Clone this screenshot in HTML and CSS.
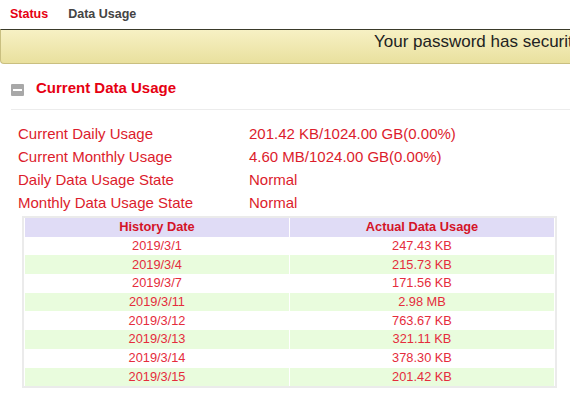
FILE: index.html
```html
<!DOCTYPE html>
<html>
<head>
<meta charset="utf-8">
<link rel="stylesheet" href="styles.css">
</head>
<body>
<nav class="nav">
  <span class="nav-item active">Status</span>
  <span class="nav-item">Data Usage</span>
</nav>
<div class="notice">Your password has security risks, please change it immediately.</div>
<main class="main">
  <div class="section-head">
    <span class="collapse-icon"></span>
    <span class="section-title">Current Data Usage</span>
  </div>
  <div class="info">
    <div class="info-row"><span class="info-label">Current Daily Usage</span><span class="info-value">201.42 KB/1024.00 GB(0.00%)</span></div>
    <div class="info-row"><span class="info-label">Current Monthly Usage</span><span class="info-value">4.60 MB/1024.00 GB(0.00%)</span></div>
    <div class="info-row"><span class="info-label">Daily Data Usage State</span><span class="info-value">Normal</span></div>
    <div class="info-row"><span class="info-label">Monthly Data Usage State</span><span class="info-value">Normal</span></div>
  </div>
  <table class="history">
    <thead>
      <tr><th>History Date</th><th>Actual Data Usage</th></tr>
    </thead>
    <tbody>
      <tr><td>2019/3/1</td><td>247.43 KB</td></tr>
      <tr><td>2019/3/4</td><td>215.73 KB</td></tr>
      <tr><td>2019/3/7</td><td>171.56 KB</td></tr>
      <tr><td>2019/3/11</td><td>2.98 MB</td></tr>
      <tr><td>2019/3/12</td><td>763.67 KB</td></tr>
      <tr><td>2019/3/13</td><td>321.11 KB</td></tr>
      <tr><td>2019/3/14</td><td>378.30 KB</td></tr>
      <tr><td>2019/3/15</td><td>201.42 KB</td></tr>
    </tbody>
  </table>
</main>
</body>
</html>
```

FILE: styles.css
```css
html, body {
  margin: 0;
  padding: 0;
  background: #fff;
  font-family: "Liberation Sans", Arial, sans-serif;
  overflow: hidden;
}

.nav {
  display: flex;
  align-items: center;
  gap: 20px;
  height: 29px;
  padding-left: 10px;
  box-sizing: border-box;
  padding-bottom: 2px;
}

.nav-item {
  font-size: 12.5px;
  font-weight: bold;
  color: #444;
}

.nav-item.active {
  color: #e60012;
}

.notice {
  height: 35px;
  box-sizing: border-box;
  border-top: 1px solid #3a3a2a;
  border-left: 1px solid #c9bf80;
  border-bottom: 1px solid #c9bf80;
  border-bottom-left-radius: 4px;
  background: linear-gradient(#f7f1c4, #e9e09e);
  white-space: nowrap;
  overflow: hidden;
  padding-left: 373px;
  padding-top: 1px;
  font-size: 17px;
  line-height: 22px;
  color: #222;
}

.main {
  padding-left: 11px;
}

.section-head {
  display: flex;
  align-items: center;
  height: 36px;
  margin-top: 10px;
  border-bottom: 1px solid #ececec;
  box-sizing: border-box;
  padding-bottom: 8px;
}

.collapse-icon {
  width: 13px;
  height: 12px;
  background: #a8a8a8;
  margin-right: 12px;
  position: relative;
  border-radius: 1px;
  flex: none;
  margin-top: 4px;
}

.collapse-icon::after {
  content: "";
  position: absolute;
  left: 2px;
  right: 2px;
  top: 5px;
  height: 2px;
  background: #fff;
}

.section-title {
  font-size: 15px;
  font-weight: bold;
  color: #e60012;
}

.info {
  margin-top: 12px;
  padding-left: 7px;
}

.info-row {
  display: flex;
  height: 23px;
  align-items: center;
  font-size: 15px;
  color: #dc1c2c;
}

.info-label {
  width: 231px;
  flex: none;
}

.history {
  margin: 2px 0 0 11px;
  width: 535px;
  table-layout: fixed;
  border: 2px solid #ebebeb;
  border-collapse: separate;
  border-spacing: 1px 0;
  font-size: 12.8px;
  color: #e52c3c;
}

.history th,
.history td {
  height: 18.7px;
  padding: 0;
  text-align: center;
  line-height: 18px;
}

.history th {
  background: #e0dcf6;
  color: #d41428;
  font-weight: bold;
}

.history tbody tr:nth-child(even) td {
  background: #e9fcdd;
}
```
